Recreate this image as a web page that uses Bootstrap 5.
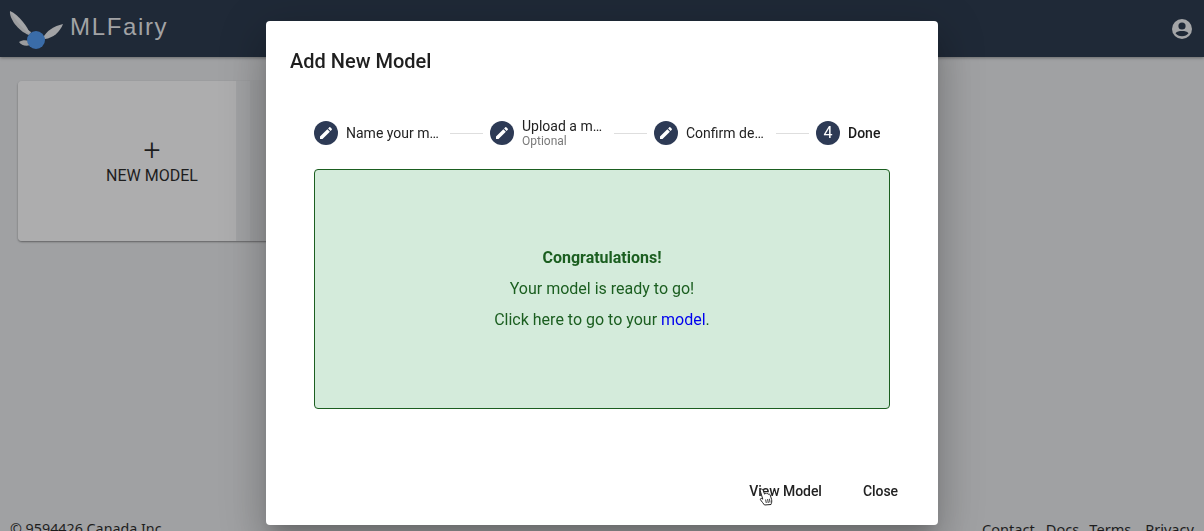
<!DOCTYPE html>
<html lang="en">
<head>
<meta charset="utf-8">
<title>MLFairy</title>
<link href="https://cdn.jsdelivr.net/npm/bootstrap@5.3.0/dist/css/bootstrap.min.css" rel="stylesheet">
<style>
html,body{height:531px;overflow:hidden}
body{background:#a0a1a3;font-family:Roboto,"Liberation Sans",sans-serif;color:#1a1a1a}
.page-shell{height:531px;overflow:hidden}
.top-bar{height:57px;background:#1f2937;box-shadow:0 1px 3px rgba(0,0,0,.35);padding:0 12px 0 9px}
.brand-name{font-family:"Liberation Sans",sans-serif;font-size:24px;letter-spacing:1.65px;color:#a2a3a5;margin-left:6px;margin-top:-4px}
.tiles{padding:24px 18px 0;height:461px}
.tile{width:268px;height:160px;background:linear-gradient(90deg,#adadae 218px,#a1a2a4 218px,#a1a2a4 232px,#9c9d9f 232px);border-radius:4px;box-shadow:0 1px 2px rgba(0,0,0,.4)}
.plus{font-size:30px;line-height:26px;font-weight:300;color:#1d1d1d}
.tile-label{font-size:16px;color:#1d1d1d;line-height:20px;margin-top:3px}
.foot-line{padding:0 10px;font-family:"Noto Sans",sans-serif;font-size:14.3px;line-height:22px;color:#1d1d1d}
.foot-links{font-size:14.6px}
.foot-a{margin-right:11px}.foot-b{margin-right:10px}.foot-c{margin-right:14px}
.dialog-layer{padding-top:21px;pointer-events:none}
.dialog-box{width:672px;height:504px;background:#fff;border-radius:4px;box-shadow:0 11px 15px -7px rgba(0,0,0,.2),0 24px 38px 3px rgba(0,0,0,.14),0 9px 46px 8px rgba(0,0,0,.12)}
.dialog-title{font-size:20px;font-weight:500;line-height:32px;padding:24px 24px 0;color:#1f1f1f}
.stepper{padding:44px 24px 0 48px;height:92px}
.step-dot{width:24px;height:24px;border-radius:50%;background:#2d3a55;color:#fff;font-size:16px;flex:none}
.step-text{font-size:14px;line-height:16px;color:#222;margin-left:8px}
.step-main{white-space:nowrap;overflow:hidden;text-overflow:ellipsis;display:block}
.step-line{line-height:24px}
.step-stack{margin-top:-3px}
.w-a{width:94px}.w-b{width:82px}.w-c{width:80px}
.step-sub{font-size:12px;line-height:12px;color:#7a7a7a;display:block;margin-top:1px}
.step-done{font-weight:500;color:#1a1a1a}
.step-rule{height:1px;background:#dedede;width:33px;margin:12px 7px 0 10px}
.success-box{width:576px;height:240px;margin:0 0 0 48px;background:#d4ebdb;border:1px solid #1b5e20;border-radius:4px;color:#1b5e20;font-size:16px;line-height:31px;padding-top:72px}
.success-box a{color:#0000ee;text-decoration:none}
.success-title{font-weight:700}
.dialog-actions{padding:72px 40px 0 0;height:116px}
.action-btn{font-size:14px;font-weight:500;line-height:20px;color:#222;background:none;border:0;padding:0;letter-spacing:-.05px}
.action-gap{margin-right:41px}
.pointer-mark{position:absolute;left:758px;top:488px}
</style>
</head>
<body>
<div class="page-shell d-flex flex-column">
  <nav class="top-bar d-flex align-items-center justify-content-between flex-shrink-0">
    <div class="d-flex align-items-center">
      <svg width="55" height="44" viewBox="9 0 55 44">
        <path d="M10 4C9 11 18 24 29 28C30 27 31 26 31 25C24 21 17 11 10 4Z" fill="#9b9c9e"/>
        <path d="M10 4C13 9 20 20 30 27C28 20 19 8 10 4Z" fill="#a5a6a8"/>
        <path d="M63 17C54 19 46 24 43 31L45 32C53 31 60 25 63 17Z" fill="#a2a3a5"/>
        <path d="M19 35C22 33 26 33 29 34L30 38C26 40 21 38 19 35Z" fill="#9b9c9e"/>
        <circle cx="36" cy="33" r="9" fill="#3a6ca8"/>
      </svg>
      <span class="brand-name">MLFairy</span>
    </div>
    <svg width="20" height="20" viewBox="0 0 20 20">
      <circle cx="10" cy="10" r="10" fill="#a4a5a7"/>
      <circle cx="10" cy="7" r="3.6" fill="#1f2937"/>
      <path d="M3.5 14.2C5 12.4 7 12 10 12C13 12 15 12.4 16.5 14.2C15 16.2 12.8 17.2 10 17.2C7.2 17.2 5 16.2 3.5 14.2Z" fill="#1f2937"/>
    </svg>
  </nav>
  <main class="tiles d-flex align-items-start flex-shrink-0">
    <div class="tile d-flex flex-column align-items-center justify-content-center">
      <div class="plus">+</div>
      <div class="tile-label">NEW MODEL</div>
    </div>
  </main>
  <footer class="foot-line d-flex justify-content-between flex-shrink-0">
    <span>© 9594426 Canada Inc.</span>
    <span class="d-flex foot-links"><span class="foot-a">Contact</span><span class="foot-b">Docs</span><span class="foot-c">Terms</span><span>Privacy</span></span>
  </footer>
</div>

<div class="dialog-layer position-fixed top-0 start-0 w-100 d-flex justify-content-center">
  <div class="dialog-box">
    <h2 class="dialog-title m-0">Add New Model</h2>
    <div class="stepper d-flex align-items-start">
      <div class="step-dot d-flex align-items-center justify-content-center"><svg width="16" height="16" viewBox="0 0 24 24" fill="#fff"><path d="M3 17.25V21h3.75L17.81 9.94l-3.75-3.75L3 17.25zM20.71 7.04c.39-.39.39-1.02 0-1.41l-2.34-2.34c-.39-.39-1.02-.39-1.41 0l-1.83 1.83 3.75 3.75 1.83-1.83z"/></svg></div>
      <div class="step-text"><span class="step-main step-line w-a">Name your model</span></div>
      <div class="step-rule"></div>
      <div class="step-dot d-flex align-items-center justify-content-center"><svg width="16" height="16" viewBox="0 0 24 24" fill="#fff"><path d="M3 17.25V21h3.75L17.81 9.94l-3.75-3.75L3 17.25zM20.71 7.04c.39-.39.39-1.02 0-1.41l-2.34-2.34c-.39-.39-1.02-.39-1.41 0l-1.83 1.83 3.75 3.75 1.83-1.83z"/></svg></div>
      <div class="step-text step-stack"><span class="step-main w-b">Upload a model</span><span class="step-sub">Optional</span></div>
      <div class="step-rule"></div>
      <div class="step-dot d-flex align-items-center justify-content-center"><svg width="16" height="16" viewBox="0 0 24 24" fill="#fff"><path d="M3 17.25V21h3.75L17.81 9.94l-3.75-3.75L3 17.25zM20.71 7.04c.39-.39.39-1.02 0-1.41l-2.34-2.34c-.39-.39-1.02-.39-1.41 0l-1.83 1.83 3.75 3.75 1.83-1.83z"/></svg></div>
      <div class="step-text"><span class="step-main step-line w-c">Confirm details</span></div>
      <div class="step-rule"></div>
      <div class="step-dot d-flex align-items-center justify-content-center">4</div>
      <div class="step-text step-done"><span class="step-main step-line">Done</span></div>
    </div>
    <div class="success-box text-center">
      <div class="success-title">Congratulations!</div>
      <div>Your model is ready to go!</div>
      <div>Click here to go to your <a href="#">model</a>.</div>
    </div>
    <div class="dialog-actions d-flex justify-content-end align-items-start">
      <button class="action-btn action-gap">View Model</button>
      <button class="action-btn">Close</button>
    </div>
  </div>
</div>
<svg class="pointer-mark" width="16" height="18" viewBox="0 0 16 18">
  <path d="M2.6 1.4C3.5.7 4.5 1 5 2L6.6 6.2C6.6 5.2 8 5 8.4 6C8.6 5.3 10 5.2 10.3 6.4C10.7 5.8 12 6 12.2 7L13.6 11.5C14 13.5 13.6 15 13 16.5L6.5 17C5.5 15.5 3.5 13.5 2.5 11.8C1.9 10.6 3.2 9.8 4.8 11.2L2.3 3C2.1 2.4 2.2 1.8 2.6 1.4Z" fill="#fff" stroke="#222" stroke-width="1" stroke-linejoin="round"/>
  <path d="M7.6 11.5L8.3 15M9.6 11L10.3 15M11.5 10.8L12 14.5" stroke="#222" stroke-width=".9" fill="none"/>
</svg>
<script src="https://cdn.jsdelivr.net/npm/bootstrap@5.3.0/dist/js/bootstrap.bundle.min.js"></script>
</body>
</html>
